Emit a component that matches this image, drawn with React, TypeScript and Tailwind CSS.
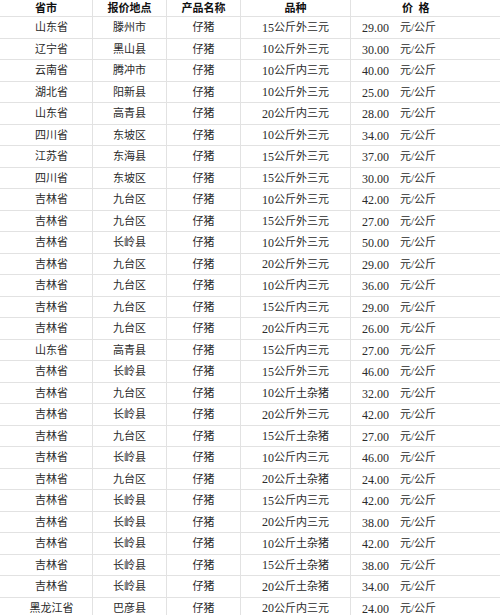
const rows: [string, string, string, string][] = [
  ["山东省", "滕州市", "15公斤外三元", "29.00"],
  ["辽宁省", "黑山县", "10公斤外三元", "30.00"],
  ["云南省", "腾冲市", "10公斤内三元", "40.00"],
  ["湖北省", "阳新县", "10公斤外三元", "25.00"],
  ["山东省", "高青县", "20公斤内三元", "28.00"],
  ["四川省", "东坡区", "10公斤外三元", "34.00"],
  ["江苏省", "东海县", "15公斤外三元", "37.00"],
  ["四川省", "东坡区", "15公斤外三元", "30.00"],
  ["吉林省", "九台区", "10公斤外三元", "42.00"],
  ["吉林省", "九台区", "15公斤外三元", "27.00"],
  ["吉林省", "长岭县", "10公斤外三元", "50.00"],
  ["吉林省", "九台区", "20公斤外三元", "29.00"],
  ["吉林省", "九台区", "10公斤内三元", "36.00"],
  ["吉林省", "九台区", "15公斤内三元", "29.00"],
  ["吉林省", "九台区", "20公斤内三元", "26.00"],
  ["山东省", "高青县", "15公斤内三元", "27.00"],
  ["吉林省", "长岭县", "15公斤外三元", "46.00"],
  ["吉林省", "九台区", "10公斤土杂猪", "32.00"],
  ["吉林省", "长岭县", "20公斤外三元", "42.00"],
  ["吉林省", "九台区", "15公斤土杂猪", "27.00"],
  ["吉林省", "长岭县", "10公斤内三元", "46.00"],
  ["吉林省", "九台区", "20公斤土杂猪", "24.00"],
  ["吉林省", "长岭县", "15公斤内三元", "42.00"],
  ["吉林省", "长岭县", "20公斤内三元", "38.00"],
  ["吉林省", "长岭县", "10公斤土杂猪", "42.00"],
  ["吉林省", "长岭县", "15公斤土杂猪", "38.00"],
  ["吉林省", "长岭县", "20公斤土杂猪", "34.00"],
  ["黑龙江省", "巴彦县", "20公斤内三元", "24.00"],
];

export default function App() {
  return (
    <div
      className="w-[500px] h-[615px] overflow-hidden bg-white text-[11px] text-[#2a2a2a]"
      style={{ fontFamily: '"Liberation Serif", "Noto Sans CJK SC", serif' }}
    >
      {/* header */}
      <div className="flex h-[17px] border-b border-[#e2e2e2] font-bold text-[#111]">
        <div className="w-[93px] border-r border-[#e2e2e2] flex items-center justify-center">省市</div>
        <div className="w-[74px] border-r border-[#e2e2e2] flex items-center justify-center">报价地点</div>
        <div className="w-[74px] border-r border-[#e2e2e2] flex items-center justify-center">产品名称</div>
        <div className="w-[110px] border-r border-[#e2e2e2] flex items-center justify-center">品种</div>
        <div className="flex-1 flex items-center pl-[51px]">价&nbsp;&nbsp;格</div>
      </div>

      {rows.map((r, i) => (
        <div key={i} className="flex h-[21.5px] border-b border-[#e2e2e2]">
          <div className="w-[93px] border-r border-[#e2e2e2] flex items-center justify-center pl-[11px]">{r[0]}</div>
          <div className="w-[74px] border-r border-[#e2e2e2] flex items-center justify-center">{r[1]}</div>
          <div className="w-[74px] border-r border-[#e2e2e2] flex items-center justify-center">仔猪</div>
          <div className="w-[110px] border-r border-[#e2e2e2] flex items-center justify-center">
            <span className="text-[12px] pt-[1px]">{r[2].slice(0, 2)}</span>
            {r[2].slice(2)}
          </div>
          <div className="w-[38px] flex items-center justify-end pt-[2px] text-[12px]">{r[3]}</div>
          <div className="flex-1 flex items-center pl-[11px]">元/公斤</div>
        </div>
      ))}
    </div>
  );
}
